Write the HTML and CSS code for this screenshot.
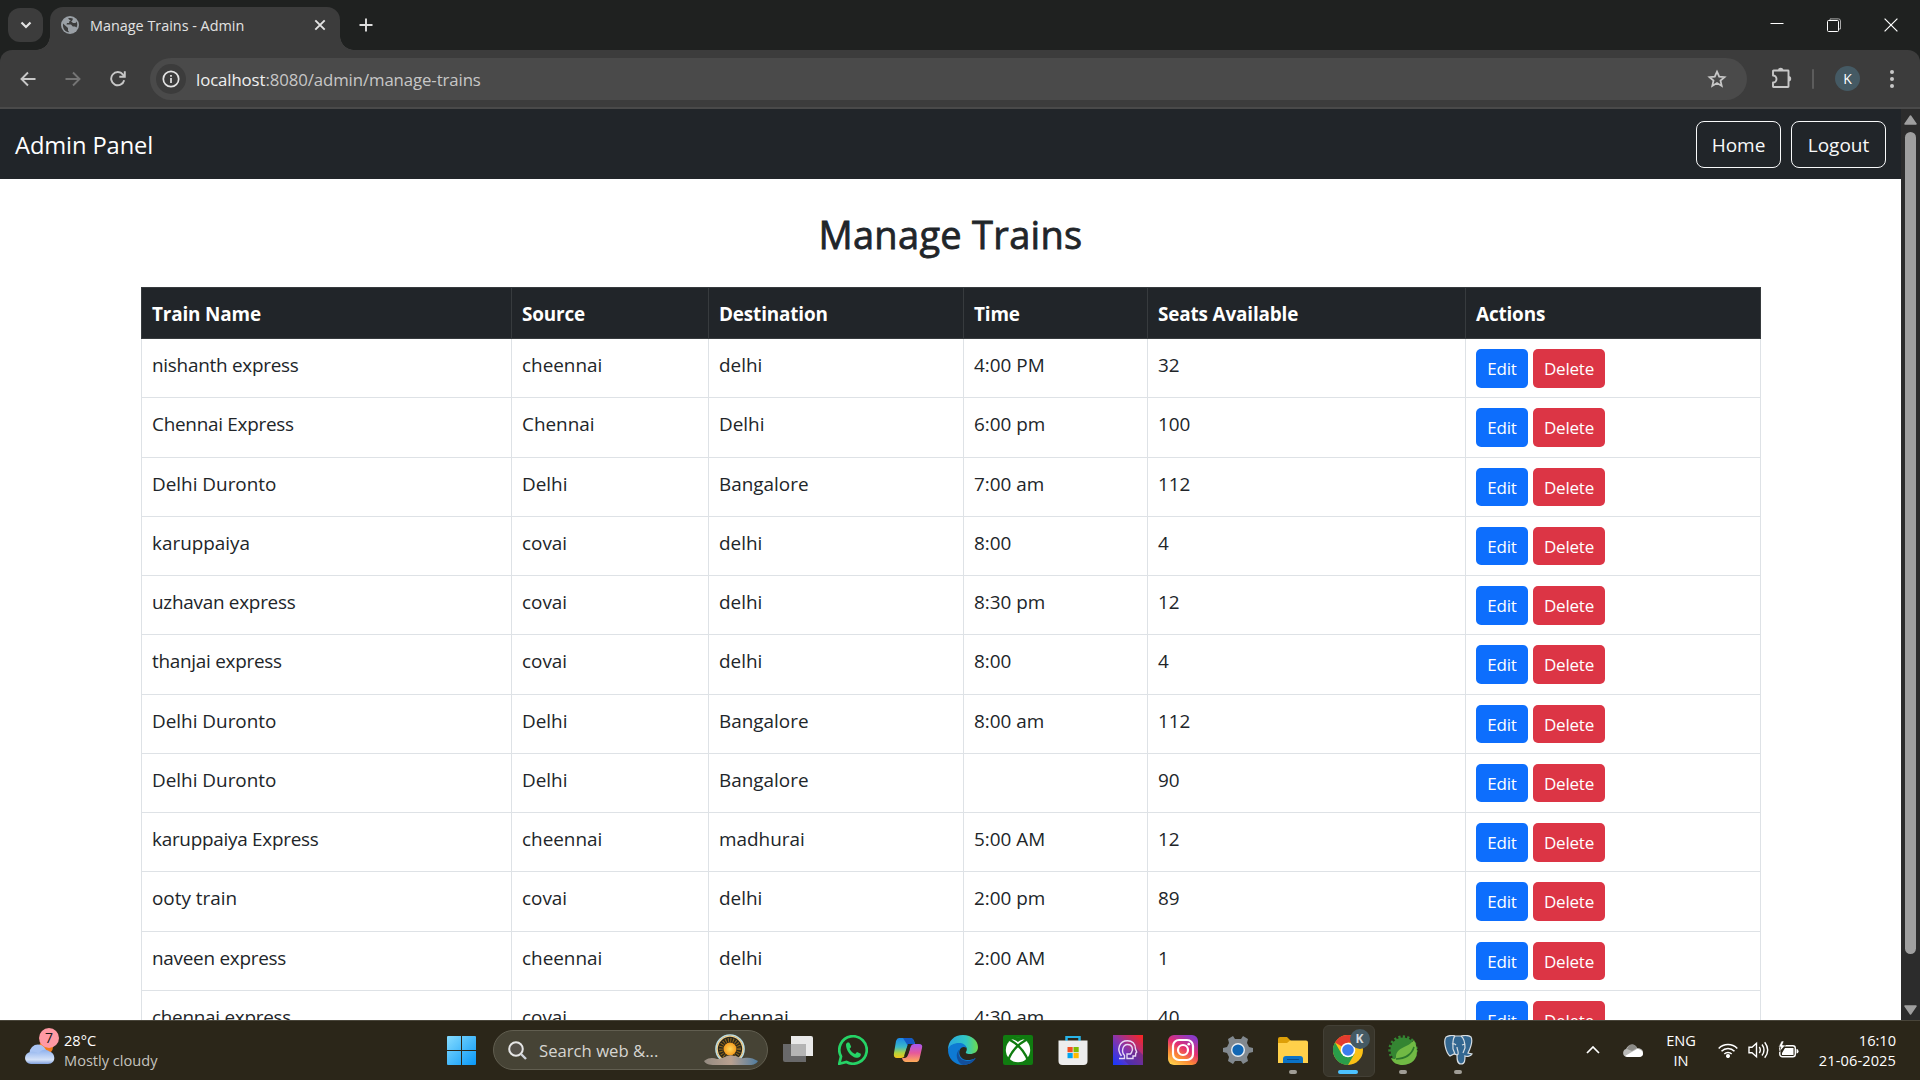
FILE: index.html
```
<!DOCTYPE html>
<html lang="en">
<head>
<meta charset="utf-8">
<title>Manage Trains - Admin</title>
<link rel="stylesheet" href="styles.css">
</head>
<body>
<div class="screen">
  <header class="tabstrip">
    <div class="tab-search"><svg width="12" height="8" viewBox="0 0 12 8"><path d="M1.5 1.5 6 6l4.500-4.500" fill="none" stroke="#e3e3e3" stroke-width="2.200"/></svg></div>
    <div class="tab">
      <svg class="globe" width="18" height="18" viewBox="0 0 18 18"><circle cx="9" cy="9" r="9" fill="#9aa0a6"/><path d="M2 7.500 7 12v2.500l1.200 1.700C4 16 1.500 12.500 2 7.500ZM7 2.500c2-.8 4-.4 5 .2l-1 2.300H8.500L8 7H6l-.5 1.500H10l1.800 2H14l1.500 1c1-2 1-4 0-6l-1 1.500h-2.500l-1.500-1.500" fill="#3c3c3c"/></svg>
      <span class="tab-title">Manage Trains - Admin</span>
      <svg class="tab-close" width="12" height="12" viewBox="0 0 12 12"><path d="m1.300 1.300 9.400 9.400m0-9.400-9.400 9.400" stroke="#e3e3e3" stroke-width="1.900"/></svg>
    </div>
    <svg class="new-tab" width="14" height="14" viewBox="0 0 14 14"><path d="M7 .5v13M.5 7h13" stroke="#dedede" stroke-width="1.900"/></svg>
    <div class="window-controls">
      <span><svg width="14" height="14" viewBox="0 0 14 14"><path d="M.5 5.500h13" stroke="#fff"/></svg></span>
      <span><svg width="14" height="14" viewBox="0 0 14 14" fill="none" stroke="#fff"><path d="M3 2.500V.9h8.500a2 2 0 0 1 2 2V11h-1.700" stroke="#aaa"/><rect x=".5" y="2.500" width="11" height="11" rx="1"/></svg></span>
      <span><svg width="14" height="14" viewBox="0 0 14 14"><path d="m.6.600 12.800 12.800m0-12.800L.6 13.400" stroke="#fff" stroke-width="1.200"/></svg></span>
    </div>
  </header>

  <div class="toolbar-wrap">
    <div class="toolbar">
      <div class="nav-buttons">
        <svg width="16" height="16" viewBox="0 0 16 16"><path d="M15.500 8H2m6-6.500L1.500 8 8 14.500" fill="none" stroke="#c7c7c7" stroke-width="1.900"/></svg>
        <svg width="16" height="16" viewBox="0 0 16 16"><path d="M.5 8H14M8 1.500 14.500 8 8 14.500" fill="none" stroke="#757575" stroke-width="1.900"/></svg>
        <svg width="16" height="16" viewBox="0 0 16 16"><path d="M14.200 9.300A6.600 6.600 0 1 1 13 3.600L14.500 5.300M9.300 5.700h5.500V.2" fill="none" stroke="#c7c7c7" stroke-width="1.900"/></svg>
      </div>
      <div class="omnibox">
        <span class="site-info"><svg width="18" height="18" viewBox="0 0 18 18"><circle cx="9" cy="9" r="7.700" fill="none" stroke="#e3e3e3" stroke-width="1.700"/><path d="M9 8v5M9 5v1.700" stroke="#e3e3e3" stroke-width="1.700"/></svg></span>
        <span class="url"><b>localhost</b>:8080/admin/manage-trains</span>
        <svg class="star" width="20" height="20" viewBox="0 0 20 20"><path d="m10 2.700 2.200 4.900 5.300.5-4 3.500 1.200 5.300L10 14.100l-4.700 2.800 1.200-5.300-4-3.500 5.300-.5Z" fill="none" stroke="#c7c7c7" stroke-width="1.800"/></svg>
      </div>
      <svg class="puzzle" width="22" height="22" viewBox="0 0 22 22"><path d="M3.500 3.500H18q.5 0 .5.500v15.500q0 .5-.5.500H3.500q-.5 0-.5-.5V15.500a3.300 3.300 0 0 0 0-7V4q0-.5.5-.5Z" fill="none" stroke="#c7c7c7" stroke-width="1.900" stroke-linejoin="round"/><path d="M8 3.500a2.700 2.700 0 0 1 5.400 0M18.500 9a2.700 2.700 0 0 1 0 5.400" fill="#c7c7c7"/></svg>
      <span class="divider"></span>
      <span class="avatar">K</span>
      <svg class="menu-dots" width="4" height="18" viewBox="0 0 4 18" fill="#c7c7c7"><circle cx="2" cy="2" r="2"/><circle cx="2" cy="9" r="2"/><circle cx="2" cy="16" r="2"/></svg>
    </div>
  </div>

  <div class="viewport">
    <main class="page">
      <nav class="navbar">
        <span class="brand">Admin Panel</span>
        <span class="nav-btn home">Home</span>
        <span class="nav-btn logout">Logout</span>
      </nav>
      <h1>Manage Trains</h1>
      <div class="table">
        <div class="row head"><span>Train Name</span><span>Source</span><span>Destination</span><span>Time</span><span>Seats Available</span><span>Actions</span></div>
        <div class="row"><span class="tight">nishanth express</span><span>cheennai</span><span>delhi</span><span>4:00 PM</span><span>32</span><div class="actions"><a class="edit">Edit</a><a class="delete">Delete</a></div></div>
        <div class="row"><span class="tight">Chennai Express</span><span>Chennai</span><span>Delhi</span><span>6:00 pm</span><span>100</span><div class="actions"><a class="edit">Edit</a><a class="delete">Delete</a></div></div>
        <div class="row"><span>Delhi Duronto</span><span>Delhi</span><span>Bangalore</span><span>7:00 am</span><span>112</span><div class="actions"><a class="edit">Edit</a><a class="delete">Delete</a></div></div>
        <div class="row"><span>karuppaiya</span><span>covai</span><span>delhi</span><span>8:00</span><span>4</span><div class="actions"><a class="edit">Edit</a><a class="delete">Delete</a></div></div>
        <div class="row"><span class="tight">uzhavan express</span><span>covai</span><span>delhi</span><span>8:30 pm</span><span>12</span><div class="actions"><a class="edit">Edit</a><a class="delete">Delete</a></div></div>
        <div class="row"><span class="tight">thanjai express</span><span>covai</span><span>delhi</span><span>8:00</span><span>4</span><div class="actions"><a class="edit">Edit</a><a class="delete">Delete</a></div></div>
        <div class="row"><span>Delhi Duronto</span><span>Delhi</span><span>Bangalore</span><span>8:00 am</span><span>112</span><div class="actions"><a class="edit">Edit</a><a class="delete">Delete</a></div></div>
        <div class="row"><span>Delhi Duronto</span><span>Delhi</span><span>Bangalore</span><span></span><span>90</span><div class="actions"><a class="edit">Edit</a><a class="delete">Delete</a></div></div>
        <div class="row"><span class="tight">karuppaiya Express</span><span>cheennai</span><span>madhurai</span><span>5:00 AM</span><span>12</span><div class="actions"><a class="edit">Edit</a><a class="delete">Delete</a></div></div>
        <div class="row"><span>ooty train</span><span>covai</span><span>delhi</span><span>2:00 pm</span><span>89</span><div class="actions"><a class="edit">Edit</a><a class="delete">Delete</a></div></div>
        <div class="row"><span class="tight">naveen express</span><span>cheennai</span><span>delhi</span><span>2:00 AM</span><span>1</span><div class="actions"><a class="edit">Edit</a><a class="delete">Delete</a></div></div>
        <div class="row"><span class="tight">chennai express</span><span>covai</span><span>chennai</span><span>4:30 am</span><span>40</span><div class="actions"><a class="edit">Edit</a><a class="delete">Delete</a></div></div>
      </div>
    </main>
    <aside class="scrollbar">
      <svg width="13" height="10" viewBox="0 0 13 10"><path d="M6.500 1 12 9H1Z" fill="#9f9f9f" stroke="#9f9f9f" stroke-width="1.500" stroke-linejoin="round"/></svg>
      <span class="thumb"></span>
      <svg width="13" height="10" viewBox="0 0 13 10"><path d="M6.500 9 12 1H1Z" fill="#9f9f9f" stroke="#9f9f9f" stroke-width="1.500" stroke-linejoin="round"/></svg>
    </aside>
  </div>

  <footer class="taskbar">
    <div class="weather">
      <div class="weather-icon">
        <svg width="32" height="38" viewBox="0 0 32 38"><defs><linearGradient id="cl" x2="0" y2="1"><stop stop-color="#8fb2ee"/><stop offset=".7" stop-color="#d5e2f8"/><stop offset="1" stop-color="#7f9fdc"/></linearGradient></defs><circle cx="22" cy="18" r="7" fill="#f27a1a"/><circle cx="14" cy="24" r="8.500" fill="#a9c4f3"/><path d="M7 35a6 6 0 0 1 0-12c3-.8 6 0 7.500 2C17 20 22 20 25 22.300c7 1.500 7.500 12.700-1 12.700Z" fill="url(#cl)"/></svg>
        <span class="badge">7</span>
      </div>
      <div class="weather-text"><span>28°C</span><span class="dim">Mostly cloudy</span></div>
    </div>
    <div class="cell"><svg width="29" height="29" viewBox="0 0 29 29"><defs><linearGradient id="win" x1="0" y1="0" x2="1" y2="1" gradientUnits="objectBoundingBox"><stop stop-color="#86dcff"/><stop offset="1" stop-color="#0898f8"/></linearGradient></defs><path d="M1 0h13v14H0V1a1 1 0 0 1 1-1Zm14 0h13a1 1 0 0 1 1 1v13H15ZM0 15h14v14H1a1 1 0 0 1-1-1Zm15 0h14v13a1 1 0 0 1-1 1H15Z" fill="url(#win)"/></svg></div>
    <div class="search">
      <svg width="19" height="19" viewBox="0 0 19 19"><circle cx="8" cy="8" r="6.800" fill="#55514a" stroke="#e6e6e6" stroke-width="2"/><path d="m13 13 5 5" stroke="#cfd3d9" stroke-width="2.400"/></svg>
      <span>Search web &amp;...</span>
      <svg class="sunrise" width="56" height="34" viewBox="0 0 56 34"><defs><radialGradient id="sun"><stop stop-color="#ffd75a"/><stop offset="1" stop-color="#f49a1c"/></radialGradient><linearGradient id="hill"><stop stop-color="#948b81"/><stop offset=".5" stop-color="#b9a190"/><stop offset="1" stop-color="#4f7ca0"/></linearGradient></defs><circle cx="27" cy="16" r="14" fill="#29271c" stroke="#b7dbe3" stroke-width="1.700"/><circle cx="27" cy="16" r="12.800" fill="none" stroke="#f3cf8b" stroke-width="1.300"/><circle cx="27" cy="16" r="9" fill="none" stroke="#8f661a" stroke-width="4" stroke-dasharray="1 1.500"/><circle cx="27" cy="16" r="6.500" fill="url(#sun)"/><path d="M1 28c6-4 9-3 13-2 6 0 12-6 17-3 5 0 5 3 10 2 5-1 9 0 14 3-3 5-9 4-14 4H14C8 32 3 32 1 28Z" fill="url(#hill)"/></svg>
    </div>
    <div class="apps">
      <div class="cell"><svg width="30" height="30" viewBox="0 0 30 30"><path d="M0 9h23v18H2q-2 0-2-2Z" fill="#69696a"/><path d="M8 1h20q2 0 2 2v18H8Z" fill="#e9e9e9"/><path d="M8 9h15v12H8Z" fill="#b4b4b4"/></svg></div>
      <div class="cell"><svg width="30" height="30" viewBox="0 0 30 30"><path d="M1.300 28.700 3 21.500A13.700 13.700 0 1 1 8.500 27Z" fill="none" stroke="#25d366" stroke-width="2.700"/><path d="M8 9.500C8.500 7.500 10.500 7 11.500 8l1.600 3.500c0 1-.8 1.500-1.500 2.300 1.500 3 3.500 4.300 5.600 5.200l1.800-2.100 3.800 1.800c.5 3-2.300 4.400-4.800 4C13 22 7.700 15 8 9.500Z" fill="#25d366"/></svg></div>
      <div class="cell"><svg width="30" height="30" viewBox="0 0 30 30"><defs><linearGradient id="c1" x2="0" y2="1"><stop stop-color="#1a87e8"/><stop offset=".45" stop-color="#3bb9c8"/><stop offset=".75" stop-color="#b3d43c"/><stop offset="1" stop-color="#f5c21b"/></linearGradient><linearGradient id="c2" x2="0" y2="1"><stop stop-color="#a857f2"/><stop offset=".5" stop-color="#e6599a"/><stop offset="1" stop-color="#ffad58"/></linearGradient></defs><path d="M6 3h11q3 0 4 3l1 3h-4q-3 0-4 4l-2 7q-1 3-4 3H4q-4 0-3-5L3 6q1-3 3-3Z" fill="url(#c1)"/><path d="M10 3h7q3 0 4 3l1 3h-4q-3 0-3 2Z" fill="#1459c5"/><path d="M24 27H13q-3 0-4-4h3q2 0 3-3l2.500-8q1-3 4-3H26q4 0 3 4l-2.500 11q-.7 3-2.500 3Z" fill="url(#c2)"/><path d="m15 9-4 12q4-1 5-4l2-8Z" fill="#2b2619"/></svg></div>
      <div class="cell"><svg width="30" height="30" viewBox="0 0 30 30"><defs><linearGradient id="e1"><stop stop-color="#2aa8e0"/><stop offset=".6" stop-color="#31c6c4"/><stop offset="1" stop-color="#6edb4c"/></linearGradient></defs><path d="M0 15C0 6 6 0 15 0s15 6 15 12c0 5-4 7-8 7-4 0-5-1-3.500-3 1.500-4-2-6-5.500-6C7 8 2 10 0 15Z" fill="url(#e1)"/><path d="M0 15c1-5 6-7 11-7 4 0 7 2 7.500 5-4-3-8 1-7 6 1 6 9 8 16 4C24 28 20 30 15 30 6 30 0 23 0 15Z" fill="#0e7ad3"/><path d="M12 14c-3 3-2 11 7 12 4 .3 7-2 9-3-3 5-8 7-13 7-6-2-9-12-3-16Z" fill="#124f9c"/></svg></div>
      <div class="cell"><svg width="30" height="30" viewBox="0 0 30 30"><rect width="30" height="30" rx="2" fill="#107c10"/><circle cx="15" cy="15" r="12.200" fill="#fff"/><path d="M6 4.500c4-1 7 1 9 2.500 2-1.500 5-3.500 9-2.500-5-3-13-3-18 0Z" fill="#107c10"/><path d="M7 5Q20 12 25 25.500M23 5Q10 12 5 25.500" fill="none" stroke="#107c10" stroke-width="2.400"/></svg></div>
      <div class="cell"><svg width="30" height="30" viewBox="0 0 30 30"><path d="M8.500 7V2h13v5" fill="none" stroke="#29b4e8" stroke-width="2"/><path d="M.5 5.500h29V26q0 4-4 4H4.500q-4 0-4-4Z" fill="#ededed"/><path d="M8.500 5.500V2h13v3.500" fill="none" stroke="#29b4e8" stroke-width="2"/><path d="M9.500 12h5.200v5.200H9.500Z" fill="#f25022"/><path d="M15.500 12h5.200v5.200h-5.200Z" fill="#7fba00"/><path d="M9.500 18h5.200v5.200H9.500Z" fill="#00a4ef"/><path d="M15.500 18h5.200v5.200h-5.200Z" fill="#ffb900"/></svg></div>
      <div class="cell"><svg width="30" height="30" viewBox="0 0 30 30"><defs><linearGradient id="hd" y1="1" x2="1" y2="0"><stop stop-color="#1238ff"/><stop offset=".5" stop-color="#8b34a8"/><stop offset="1" stop-color="#ff241c"/></linearGradient></defs><path d="M0 0h30v30H0Z" fill="url(#hd)"/><path d="m8 22 8 8h14V20l-7-7Z" fill="#41278b" opacity=".45"/><path d="M6 23.500h5.500v-3C8 17 9.500 9.500 14.500 9.500c5 0 6 5 4 8l-1 1.500H14v4.500h6V21h2.500l.3-3 .9-1-1.200-3C22.500 8.500 19 5.700 14.500 5.700 6 5.700 3.500 15 8.500 21" fill="none" stroke="#e8d9f5" stroke-width="1.400"/></svg></div>
      <div class="cell"><svg width="30" height="30" viewBox="0 0 30 30"><defs><linearGradient id="ig" x1=".15" y1="1" x2=".7" y2="0"><stop stop-color="#ffd34d"/><stop offset=".3" stop-color="#fb8a35"/><stop offset=".6" stop-color="#e52e71"/><stop offset="1" stop-color="#8a3ac8"/></linearGradient></defs><rect width="30" height="30" rx="6" fill="url(#ig)"/><g fill="none" stroke="#fff" stroke-width="2.200"><rect x="5" y="5" width="20" height="20" rx="6"/><circle cx="15" cy="15" r="5"/></g><circle cx="20.800" cy="9.200" r="1.400" fill="#fff"/></svg></div>
      <div class="cell"><svg width="30" height="30" viewBox="0 0 30 30"><path d="m10 1 2 3h6l2-3 5 3-1 4 2 4 4 1v4l-4 1-2 4 1 4-5 3-2-3h-6l-2 3-5-3 1-4-2-4-4-1v-4l4-1 2-4-1-4Z" fill="#82898f"/><circle cx="15" cy="15" r="7" fill="#e9eef2"/><circle cx="15" cy="15" r="5.600" fill="#1167b4"/></svg></div>
      <div class="cell running"><svg width="30" height="30" viewBox="0 0 30 30"><path d="M0 4q0-2 2-2h7l4 4v3H0Z" fill="#dd9f08"/><path d="M0 8h9l3-2.500h16q2 0 2 2V28H0Z" fill="#ffd04a"/><path d="M5 28v-4q0-3 3-3h14q3 0 3 3v4Z" fill="#0b73c7"/><path d="M9 24.500h12" stroke="#064c8d"/></svg></div>
      <div class="cell running active"><svg width="30" height="30" viewBox="0 0 30 30"><circle cx="15" cy="15" r="15" fill="#fbc116"/><path d="M15 15 2 7.500A15 15 0 0 1 28 7.500H15Z" fill="#e33b2e"/><path d="M2 7.500A15 15 0 0 0 15 30l6.500-11.300L15 15l-6.500 3.700Z" fill="#2a9d4a"/><circle cx="15" cy="15" r="7.300" fill="#fff"/><circle cx="15" cy="15" r="5.800" fill="#3b7ded"/></svg><span class="profile-badge">K</span></div>
      <div class="cell running"><svg width="30" height="30" viewBox="0 0 30 30"><circle cx="15" cy="15" r="13.200" fill="none" stroke="#348532" stroke-width="3" stroke-dasharray="2.200 2.200"/><circle cx="15" cy="15" r="12.500" fill="#348532"/><path d="M26 5c5 10 5 24-11 25C9 30 5 28 3 23c3 2 5 1 5-1C8 12 20 13 26 5Z" fill="#71b944"/><path d="M8 24c9 0 15-3 18-12-2 8-8 11-18 12" fill="none" stroke="#2d782c" stroke-width="1.500"/></svg></div>
      <div class="cell running"><svg width="30" height="30" viewBox="0 0 30 30"><path d="M3 2C7 0 10 0 12 1h6c4-1 8-.5 10 1 2 4 0 10-3 16l4 1c-1 2-5 3-7 2 0 4 0 8-4 8s-4-5-4-9l-3-1-4 2C3 18 0 6 3 2Z" fill="#336791" stroke="#d7dde2" stroke-width="1.200"/><path d="M12 1c-3 3-2 8-2 13l2 5m6-18c4 3 4 8 4 12l-2 5M14 20c3-1 0-5 0-8M9 9c2-1 3 0 4 1m6 0 3-1" fill="none" stroke="#d7dde2" stroke-width="1.200"/></svg></div>
    </div>
    <div class="tray">
      <div class="chev"><svg width="14" height="8" viewBox="0 0 14 8"><path d="m1 7 6-6 6 6" fill="none" stroke="#fff" stroke-width="1.700"/></svg></div>
      <div class="chev"><svg width="20" height="13" viewBox="0 0 20 13"><path d="M4 13C-1 13-1 6 3 5 5 0 12-1 14 4c8 0 8 9 2 9Z" fill="#b9b9b7"/><path d="M5 3c3-5 8-2 9 1L9 7 4 5Z" fill="#8c8b87"/><path d="M2 12 14 5c7 0 8 8 2 8H4Z" fill="#fff"/></svg></div>
      <div class="lang"><span>ENG</span><span>IN</span></div>
      <div class="status"><svg width="20" height="15" viewBox="0 0 20 15" fill="none" stroke="#fff" stroke-width="1.500"><path d="M.7 5.500a13 13 0 0 1 18.600 0M3.500 8.300a9 9 0 0 1 13 0M6.300 11a5.200 5.200 0 0 1 7.400 0"/><circle cx="10" cy="13" r="1.300" fill="#fff"/></svg></div>
      <div class="status"><svg width="21" height="18" viewBox="0 0 21 18" fill="none" stroke="#fff" stroke-width="1.400"><path d="M1 6.200h3l4.500-4v13.600l-4.500-4H1ZM11.300 6q2 3 0 6M14 3.500q4 5.500 0 11M16.700 1.200q6 7.800 0 15.600"/></svg></div>
      <div class="status"><svg width="21" height="18" viewBox="0 0 21 18"><rect x="1.800" y="4.700" width="15.500" height="11" rx="2.500" fill="none" stroke="#fff" stroke-width="1.400"/><path d="M7 7h8.500v7H4v-2Z" fill="#fff"/><path d="M18.500 8v4.500q2 0 2-2.200T18.500 8Z" fill="#fff"/><path d="M3.500 0 .5 6h2.300L1.500 11 7.500 4H4.500L6 0Z" fill="#fff" stroke="#2b2619" stroke-width=".6"/></svg></div>
      <div class="clock"><span>16:10</span><span class="date">21-06-2025</span></div>
    </div>
  </footer>
</div>
</body>
</html>
```
FILE: styles.css
```
* { box-sizing: border-box; }
body { margin: 0; overflow: hidden; background: #1f2120; font-family: "Open Sans", "Noto Sans", sans-serif; }
svg { display: block; flex: none; }
.screen { width: 1920px; height: 1080px; display: flex; flex-direction: column; overflow: hidden; }

/* browser tab strip */
.tabstrip { height: 50px; flex: none; display: flex; background: #1f2120; padding-left: 8px; }
.tab-search { width: 35px; height: 34px; margin: 8px 7px 0 0; border-radius: 12px; background: #3c3c3c; display: flex; align-items: center; justify-content: center; }
.tab { position: relative; width: 290px; height: 43px; margin-top: 7px; padding: 0 14px 7px 11px; border-radius: 13px 13px 0 0; background: #3c3c3c; display: flex; align-items: center; }
.tab::before, .tab::after { content: ""; position: absolute; bottom: 0; width: 14px; height: 14px; }
.tab::before { left: -14px; background: radial-gradient(circle at 0 0, transparent 13.500px, #3c3c3c 14px); }
.tab::after { right: -14px; background: radial-gradient(circle at 100% 0, transparent 13.500px, #3c3c3c 14px); }
.tab-title { margin-left: 11px; flex: 1; font-size: 14.400px; color: #e3e3e3; white-space: nowrap; }
.new-tab { margin: 18px 0 0 19px; }
.window-controls { margin-left: auto; padding-right: 1px; display: flex; height: 49px; }
.window-controls span { width: 57px; display: flex; align-items: center; justify-content: center; }

/* browser toolbar */
.toolbar-wrap { height: 59px; flex: none; background: #1f2120; }
.toolbar { height: 59px; padding-top: 8px; background: #3c3c3c; border-bottom: 2px solid #4a4a4a; border-radius: 12px 12px 0 0; display: flex; align-items: flex-start; }
.nav-buttons { height: 42px; width: 150px; padding-left: 20px; display: flex; align-items: center; gap: 29px; }
.omnibox { width: 1597px; height: 42px; padding: 0 20px 0 6px; border-radius: 21px; background: #4a4a4a; display: flex; align-items: center; }
.site-info { width: 30px; height: 30px; border-radius: 50%; background: #3c3c3c; display: flex; align-items: center; justify-content: center; }
.url { margin-left: 10px; font-size: 16.800px; color: #c7c7c7; letter-spacing: -0.1px; }
.url b { font-weight: 400; color: #f0f0f0; }
.star { margin-left: auto; }
.puzzle { margin: 9px 0 0 23px; }
.divider { width: 2px; height: 20px; margin: 11px 0 0 20px; background: #5c5c5c; border-radius: 1px; }
.avatar { width: 25px; height: 25px; margin: 8px 0 0 21px; border-radius: 50%; background: #455a64; color: #fff; font-size: 14px; line-height: 25px; text-align: center; }
.menu-dots { margin: 12px 0 0 30px; }

/* page */
.viewport { height: 911px; flex: none; display: flex; background: #fff; overflow: hidden; }
.page { width: 1901px; color: #212529; }
.navbar { height: 70px; padding: 0 15px; background: #212529; display: flex; align-items: center; gap: 10px; color: #fff; }
.brand { flex: 1; padding-top: 2px; font-size: 23.700px; letter-spacing: -0.1px; }
.nav-btn { height: 47px; border: 1px solid #f8f9fa; border-radius: 8px; color: #f8f9fa; font-size: 19px; line-height: 46px; text-align: center; }
.home { width: 85px; }
.logout { width: 95px; }
h1 { margin: 30px 0 28px; height: 50px; line-height: 50px; font-size: 38px; font-weight: 400; letter-spacing: 0.3px; -webkit-text-stroke: 0.8px #212529; text-align: center; }
.table { width: 1620px; margin-left: 141px; border-left: 1px solid #dee2e6; }
.row { display: grid; grid-template-columns: 370px 197px 255px 184px 318px 295px; height: 59.250px; }
.row > * { padding: 10px 10px 0; border-right: 1px solid #dee2e6; border-bottom: 1px solid #dee2e6; font-size: 18.900px; line-height: 32px; white-space: nowrap; }
.row > .tight { letter-spacing: -0.260px; }
.head { width: 1620px; height: 52px; margin-left: -1px; background: #212529; color: #fff; border-top: 1px solid #373b3e; border-left: 1px solid #373b3e; }
.head > * { border-color: #373b3e; font-weight: 700; letter-spacing: -0.150px; }
.row > .actions { display: flex; gap: 5px; }
.actions a { height: 38.500px; border-radius: 5px; color: #fff; font-size: 17px; letter-spacing: -0.200px; line-height: 39px; text-align: center; }
.edit { width: 52px; background: #0d6efd; }
.delete { width: 72px; background: #dc3545; }
.scrollbar { width: 19px; background: #2c2c2c; padding: 6px 0 4px; display: flex; flex-direction: column; align-items: center; }
.scrollbar svg:last-child { margin-bottom: 1px; }
.thumb { width: 11px; height: 822px; margin: 7px 0 auto; border-radius: 6px; background: #9f9f9f; }

/* taskbar */
.taskbar { height: 60px; flex: none; background: #2b2619; box-shadow: inset 0 1px #49453a; color: #fff; display: flex; align-items: center; font-size: 14.600px; }
.weather { width: 434px; padding-left: 24px; display: flex; }
.weather-icon { position: relative; width: 40px; height: 38px; margin-top: -1px; }
.badge { position: absolute; left: 15px; top: -1px; width: 20px; height: 20px; border-radius: 50%; background: #ff99a4; color: #1a1a1a; text-align: center; line-height: 20px; font-size: 14px; }
.weather-text { display: flex; flex-direction: column; line-height: 20px; }
.dim { color: #c5c3bf; }
.cell { position: relative; width: 55px; height: 50px; display: flex; align-items: center; justify-content: center; flex: none; }
.search { width: 275px; height: 40px; margin: 0 2.500px 0 4px; padding: 0 8px 0 14px; border: 1px solid #615e50; border-radius: 20px; background: #464335; display: flex; align-items: center; color: #d6d5d1; font-size: 16.700px; white-space: nowrap; }
.search span { margin-left: 12px; }
.sunrise { margin-left: auto; }
.apps { display: flex; }
.running::after { content: ""; position: absolute; bottom: 1px; left: 23.500px; width: 8px; height: 4px; border-radius: 2px; background: #a09d96; }
.active::after { left: 17.500px; width: 20px; background: #4cc2ff; }
.active::before { content: ""; position: absolute; left: 2.500px; top: 0; width: 50px; height: 50px; border: 1px solid #434036; border-radius: 6px; background: #38352a; }
.active svg { position: relative; }
.profile-badge { position: absolute; left: 29px; top: 4px; width: 20px; height: 20px; border-radius: 50%; background: #455a64; color: #d7dde0; font-size: 12px; font-weight: 700; line-height: 20px; text-align: center; }
.tray { margin-left: auto; padding-right: 24px; display: flex; align-items: center; }
.chev { width: 40px; display: flex; justify-content: center; }
.lang { width: 60px; padding-right: 4px; display: flex; flex-direction: column; align-items: center; line-height: 20px; }
.status { width: 30px; display: flex; justify-content: center; }
.clock { width: 93px; display: flex; flex-direction: column; align-items: flex-end; line-height: 20px; }
.date { letter-spacing: 0.100px; }
```
